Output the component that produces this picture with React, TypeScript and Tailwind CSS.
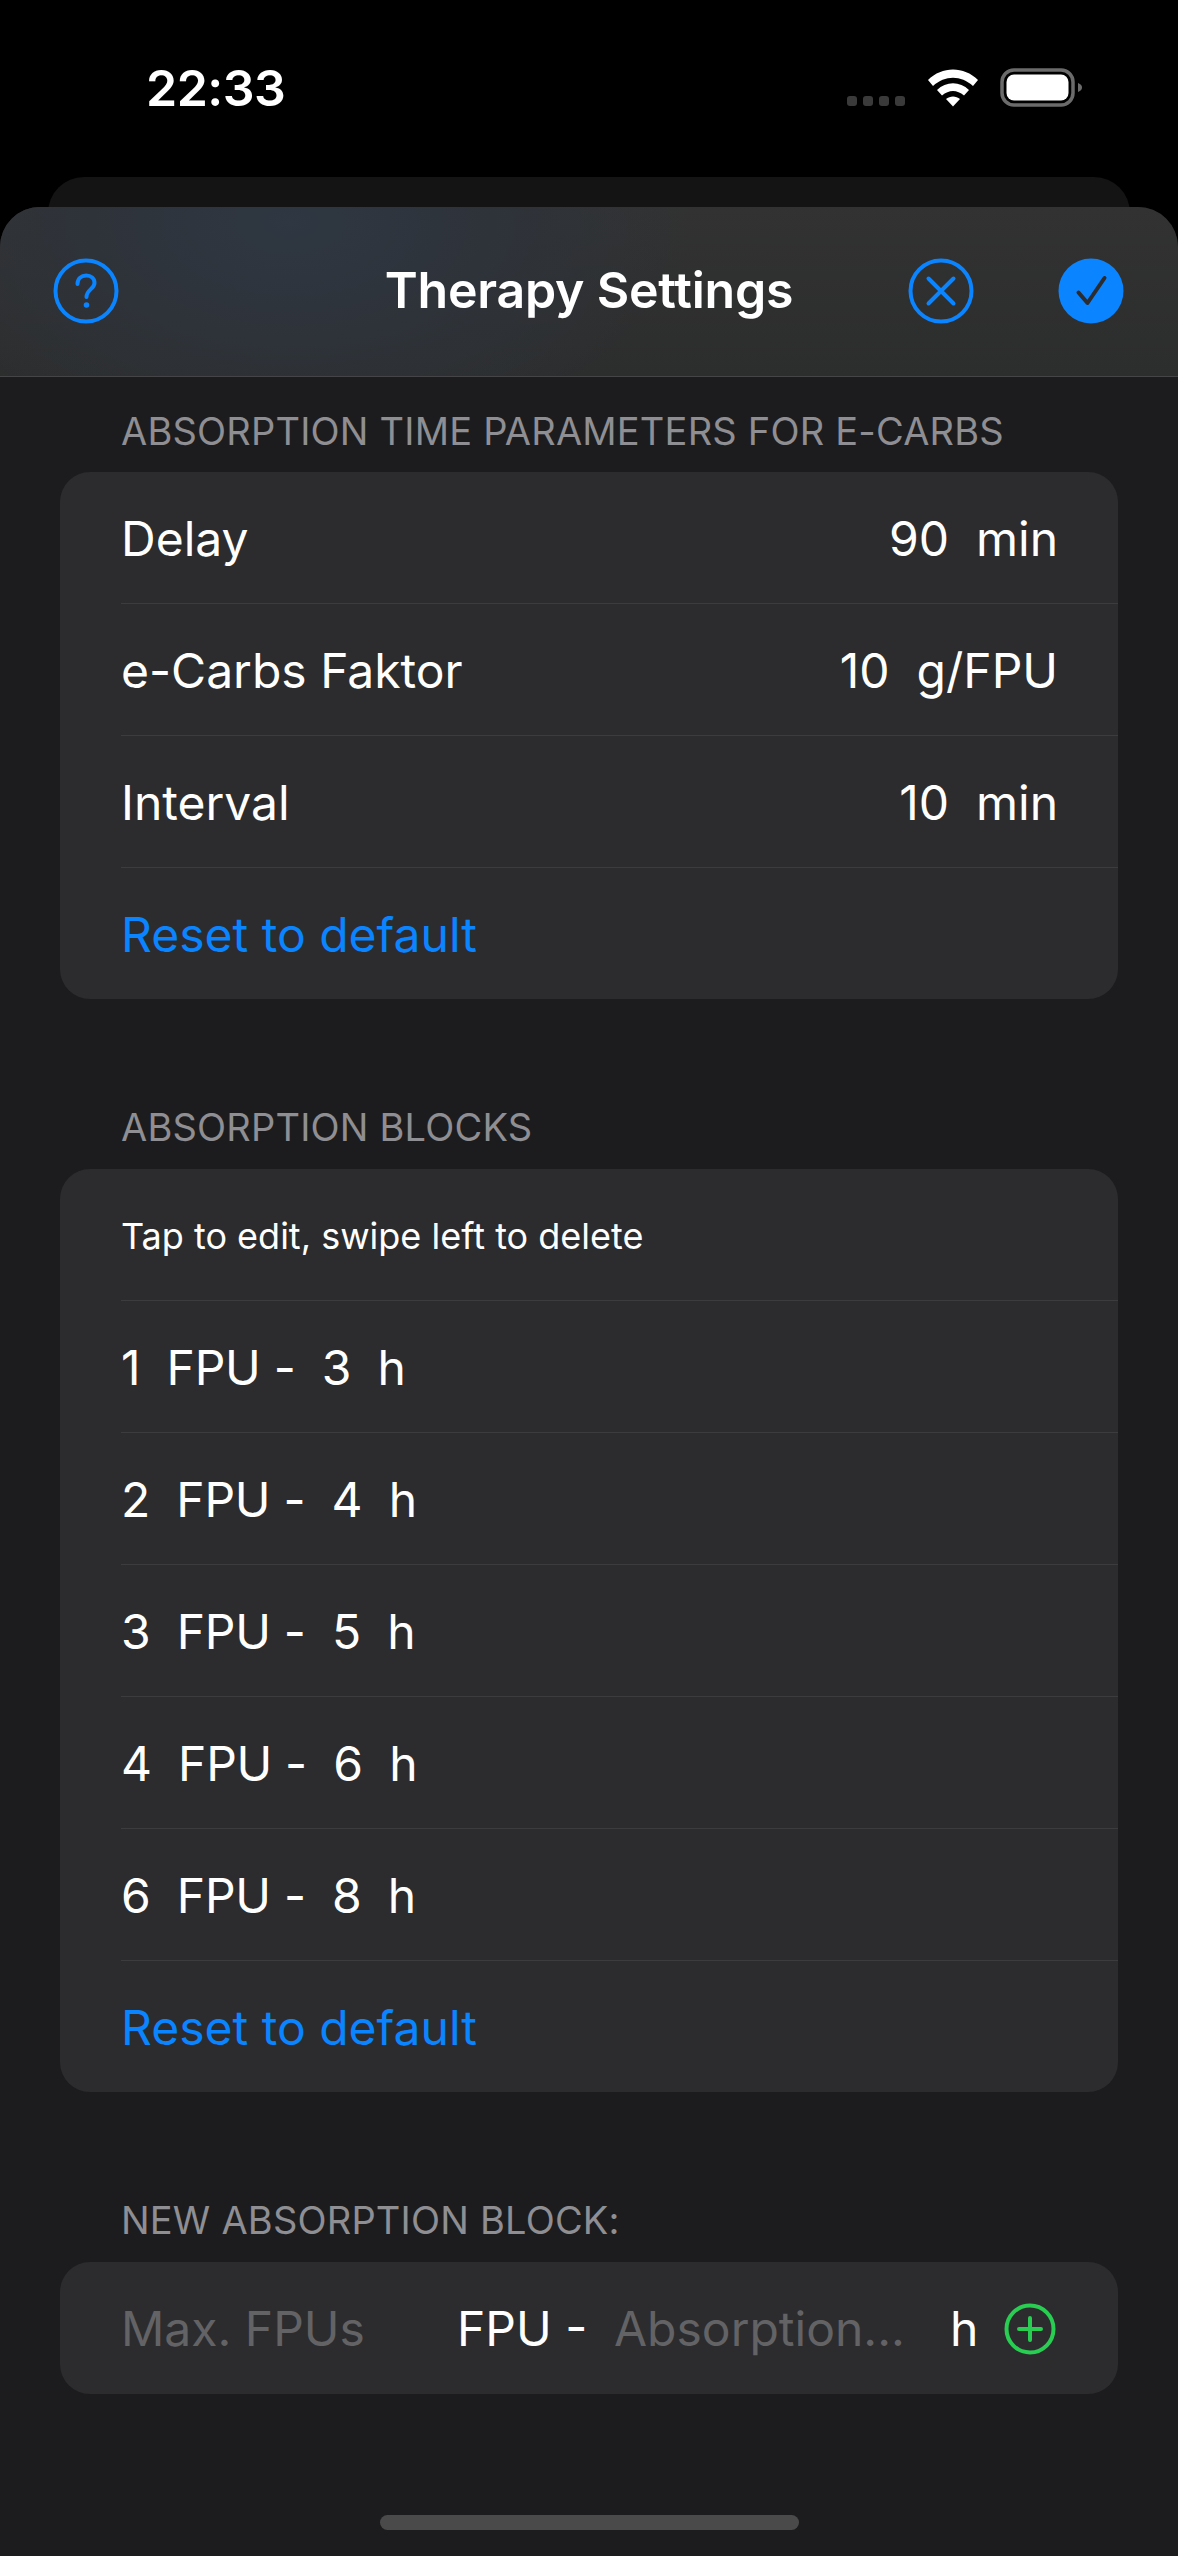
const FONT = "font-['Inter','Liberation_Sans',sans-serif]";

const StatusBar = () => (
  <div className="flex h-[177px] items-start justify-between">
    <span className="ml-[146px] mt-[58px] text-[50px] font-semibold leading-[60px] tracking-[-0.5px] text-white">
      22:33
    </span>
    <div className="mr-[95px] mt-[68px] flex items-end">
      <div className="mb-[1px] mr-[23px] flex gap-[6px]">
        <div className="h-[10px] w-[10px] rounded-[3px] bg-[#3a3a3a]" />
        <div className="h-[10px] w-[10px] rounded-[3px] bg-[#3a3a3a]" />
        <div className="h-[10px] w-[10px] rounded-[3px] bg-[#3a3a3a]" />
        <div className="h-[10px] w-[10px] rounded-[3px] bg-[#3a3a3a]" />
      </div>
      <svg width="50" height="38" viewBox="0 0 50 38" className="mr-[22px]">
        <path d="M0 11 C14 -3 36 -3 50 11 L45 17 C33 6 17 6 5 17 Z" fill="#fff" />
        <path d="M9 21 C18 12 32 12 41 21 L36 26.500 C29 20.500 21 20.500 14 26.500 Z" fill="#fff" />
        <path d="M18 30 C22 26.500 28 26.500 32 30 L25 37.500 Z" fill="#fff" />
      </svg>
      <svg width="83" height="39" viewBox="0 0 83 39">
        <rect x="2" y="2" width="71" height="35" rx="12" fill="none" stroke="#6b6b6b" strokeWidth="3.500" />
        <rect x="6.500" y="6.500" width="62" height="26" rx="7.500" fill="#fff" />
        <path d="M78 15 C81 16 82 18 82 19.500 C82 21 81 23 78 24 Z" fill="#6b6b6b" />
      </svg>
    </div>
  </div>
);

const HelpIcon = () => (
  <svg width="66" height="66" viewBox="0 0 66 66" fill="none">
    <circle cx="33" cy="33" r="30.500" stroke="#0a84ff" strokeWidth="4" />
    <path
      d="M24.500 26 C24.500 20.500 28.500 17.500 33.200 17.500 C38 17.500 41.500 20.500 41.500 25 C41.500 31 33.500 31.500 33.500 39"
      stroke="#0a84ff"
      strokeWidth="4"
      strokeLinecap="round"
    />
    <circle cx="33.500" cy="47" r="2.800" fill="#0a84ff" />
  </svg>
);

const CloseIcon = () => (
  <svg width="66" height="66" viewBox="0 0 66 66" fill="none">
    <circle cx="33" cy="33" r="30.500" stroke="#0a84ff" strokeWidth="4" />
    <path d="M20.500 20.500 L45.500 45.500 M45.500 20.500 L20.500 45.500" stroke="#0a84ff" strokeWidth="4" strokeLinecap="round" />
  </svg>
);

const CheckIcon = () => (
  <svg width="66" height="66" viewBox="0 0 66 66" fill="none">
    <circle cx="33" cy="33" r="32.500" fill="#0a84ff" />
    <path d="M20.500 34.500 L29.500 45 L46.500 20" stroke="#2c2c2e" strokeWidth="4" strokeLinecap="round" strokeLinejoin="round" />
  </svg>
);

const PlusIcon = () => (
  <svg width="52" height="52" viewBox="0 0 52 52" fill="none">
    <circle cx="26" cy="26" r="23.500" stroke="#28cd52" strokeWidth="4" />
    <path d="M26 15 V37 M15 26 H37" stroke="#28cd52" strokeWidth="4" strokeLinecap="round" />
  </svg>
);

const SectionLabel = ({ children }: { children: string }) => (
  <p className="h-[42px] pl-[121px] text-[38px] leading-[42px] tracking-[0.2px] text-[#8e8e93]">{children}</p>
);

const Row = ({ label, value, small }: { label: string; value?: string; small?: boolean }) => (
  <div className="ml-[61px] flex h-[132px] items-center justify-between border-b border-[#3c3c3f] pr-[60px] pt-[2px]">
    <span className={`whitespace-pre text-white ${small ? "text-[36px]" : "text-[48px]"}`}>{label}</span>
    {value && <span className="whitespace-pre text-[48px] text-white">{value}</span>}
  </div>
);

// FPU rows run a little tighter than the other rows
const BlockRow = ({ label }: { label: string }) => (
  <div className="ml-[61px] flex h-[132px] items-center border-b border-[#3c3c3f] pt-[2px]">
    <span className="whitespace-pre text-[48px] tracking-[-0.3px] text-white">{label}</span>
  </div>
);

const ResetRow = () => (
  <div className="ml-[61px] flex h-[131px] items-center pt-[2px] text-[48px] text-[#0a84ff]">Reset to default</div>
);

export default function App() {
  return (
    <div className={`${FONT} min-h-[2556px] w-[1178px] overflow-hidden bg-black`}>
      <StatusBar />
      <div className="mx-[48px] h-[60px] rounded-t-[36px] bg-[#141414]" />
      <div className="-mt-[30px] h-[2349px] rounded-t-[40px] bg-[#1c1c1e]">
        <header className="relative flex h-[170px] items-center justify-between rounded-t-[40px] border-b border-[#454547] bg-[radial-gradient(ellipse_400px_230px_at_290px_15px,#2e3742_0%,#2e333a_50%,transparent_100%),linear-gradient(to_bottom,#323232,#2c2d2d)] pb-[2px] pl-[53px] pr-[54px]">
          <HelpIcon />
          <h1 className="absolute left-0 right-0 text-center text-[50px] font-semibold tracking-[-0.2px] text-white">
            Therapy Settings
          </h1>
          <div className="flex gap-[84px]">
            <CloseIcon />
            <CheckIcon />
          </div>
        </header>

        <div className="mt-[33px]">
          <SectionLabel>ABSORPTION TIME PARAMETERS FOR E-CARBS</SectionLabel>
          <section className="mx-[60px] mt-[20px] rounded-[30px] bg-[#2c2c2e]">
            <Row label="Delay" value="90  min" />
            <Row label="e-Carbs Faktor" value="10  g/FPU" />
            <Row label="Interval" value="10  min" />
            <ResetRow />
          </section>
        </div>

        <div className="mt-[107px]">
          <SectionLabel>ABSORPTION BLOCKS</SectionLabel>
          <section className="mx-[60px] mt-[21px] rounded-[30px] bg-[#2c2c2e]">
            <Row label="Tap to edit, swipe left to delete" small />
            <BlockRow label="1  FPU -  3  h" />
            <BlockRow label="2  FPU -  4  h" />
            <BlockRow label="3  FPU -  5  h" />
            <BlockRow label="4  FPU -  6  h" />
            <BlockRow label="6  FPU -  8  h" />
            <ResetRow />
          </section>
        </div>

        <div className="mt-[107px]">
          <SectionLabel>NEW ABSORPTION BLOCK:</SectionLabel>
          <section className="mx-[60px] mt-[21px] flex h-[132px] items-center rounded-[30px] bg-[#2c2c2e] pl-[61px] pt-[2px] text-[48px]">
            <span className="w-[336px] text-[#636366]">Max. FPUs</span>
            <span className="w-[157px] whitespace-pre text-white">FPU -</span>
            <span className="w-[336px] text-[#636366]">Absorption...</span>
            <span className="w-[54px] text-white">h</span>
            <PlusIcon />
          </section>
        </div>

        <div className="mx-auto mt-[121px] h-[15px] w-[419px] rounded-full bg-[#4a4a4a]" />
      </div>
    </div>
  );
}
